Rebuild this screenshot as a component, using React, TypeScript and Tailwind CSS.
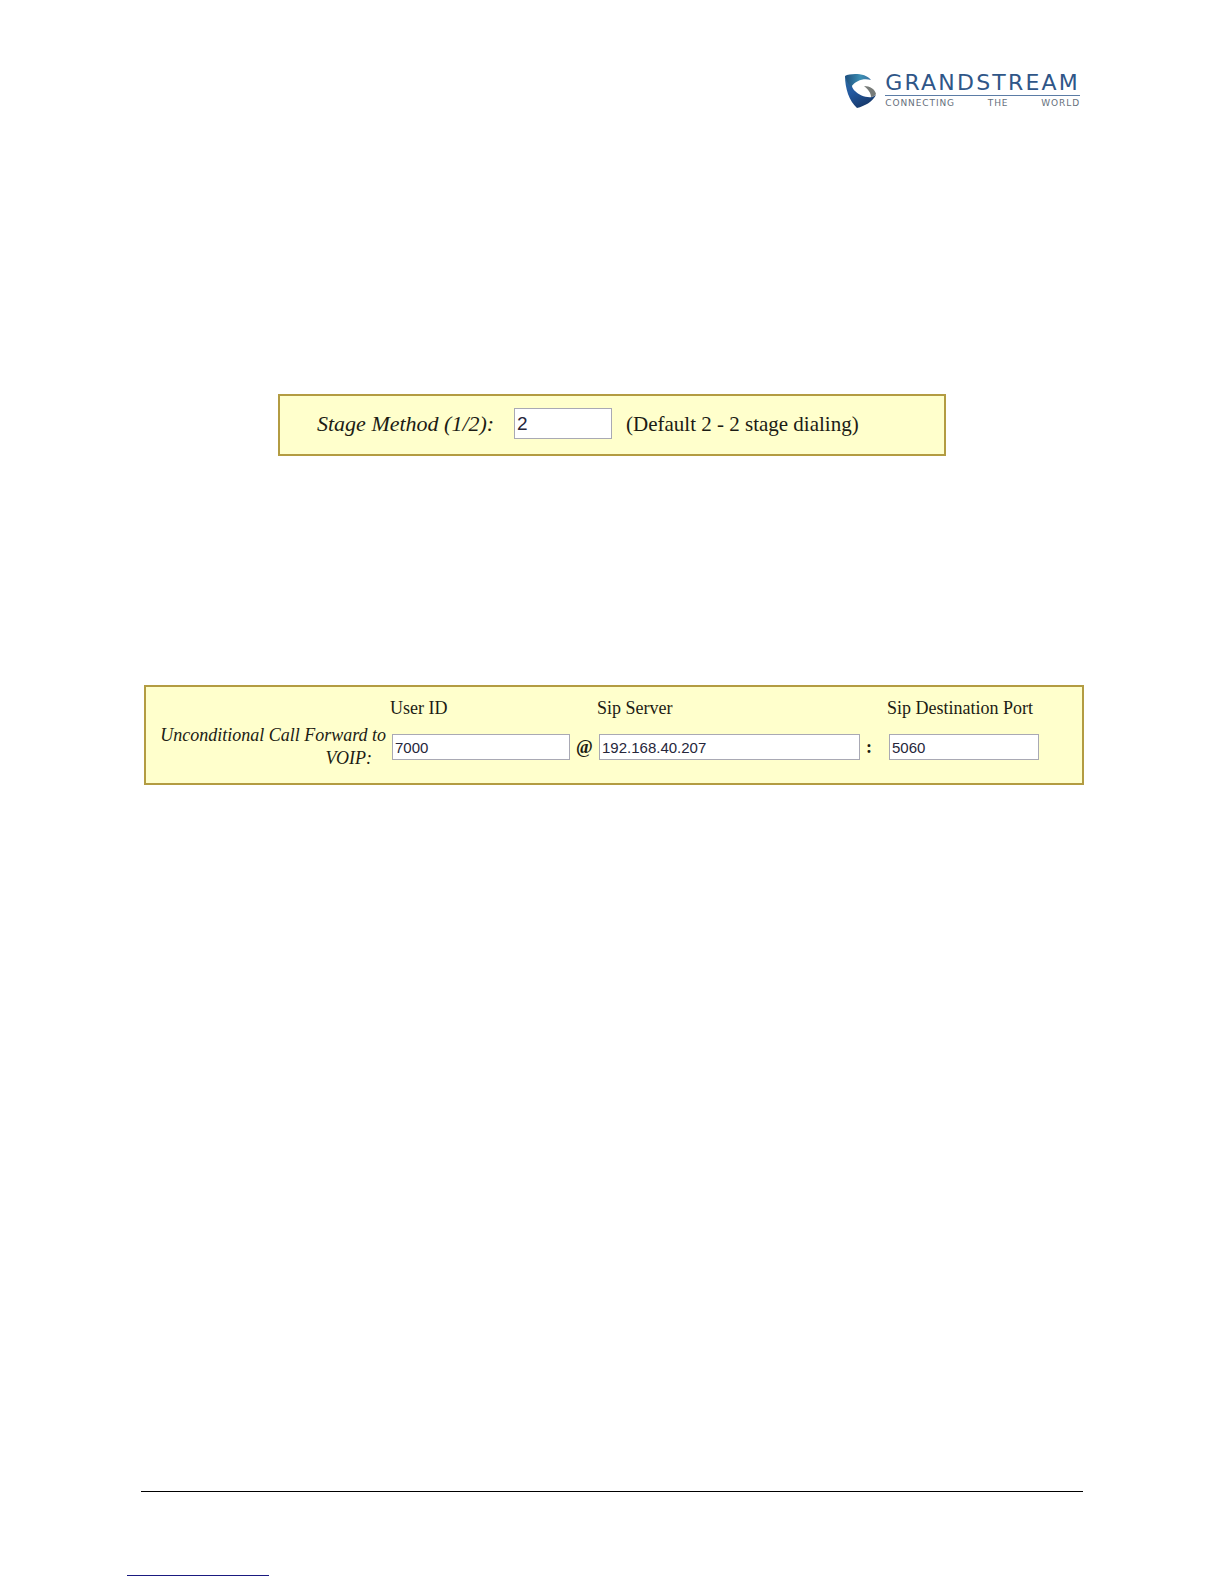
import React from 'react';

const inputClass = "block w-full border border-[#a9a9b4] bg-white text-[#26263a] font-['Liberation_Sans',sans-serif] outline-none";

const Logo = () => {
    return (
        <div className="flex items-start gap-2 text-[#2f5688] font-['DejaVu_Sans',sans-serif]">
            <svg className="mt-[2px] h-[36px] w-[33px] shrink-0" viewBox="0 0 33 36" aria-hidden="true">
                <defs>
                    <linearGradient id="top" x1="0" y1="0" x2="1" y2="0">
                        <stop offset="0" stopColor="#1d4d7c" />
                        <stop offset="0.6" stopColor="#3c8fb4" />
                        <stop offset="1" stopColor="#3a6f9f" />
                    </linearGradient>
                    <linearGradient id="side" x1="0" y1="0" x2="0.5" y2="1">
                        <stop offset="0" stopColor="#2b6a9c" />
                        <stop offset="0.5" stopColor="#2459a0" />
                        <stop offset="1" stopColor="#173a6c" />
                    </linearGradient>
                </defs>
                <path d="M1 3C1 15 5 28 13 35C21 33 28 29 32 22L28 24C22 25 15 22 11 18C8 15 7 12 9 9L4 4Z" fill="url(#side)" />
                <path d="M1 3C7 0 22 0 27 7C20 5 12 7 7 14C4 11 2 7 1 3Z" fill="url(#top)" />
                <path d="M20 13C26 13 31 16 32 21C31 23 29 24 27 24C27 20 24 16 20 13Z" fill="#777b78" />
            </svg>
            <div>
                <div className="border-b border-[#5b7ca6] text-[22px] leading-[24px] tracking-widest">GRANDSTREAM</div>
                <div className="mt-[2px] flex justify-between text-[9px] leading-[10px] tracking-widest text-[#66707c]">
                    <span>CONNECTING</span> <span>THE</span> <span>WORLD</span>
                </div>
            </div>
        </div>
    );
};

const StageMethod = () => {
    return (
        <div className="mx-auto flex w-full max-w-[668px] items-start border-2 border-[#b39c42] bg-[#ffffcc] pt-3 pb-[14px] pl-[37px]">
            <label htmlFor="stage" className="w-[197px] shrink-0 text-[22px] leading-[32px] italic">Stage Method (1/2):</label>
            <div className="w-[98px] shrink-0">
                <input id="stage" type="text" defaultValue="2" className={`${inputClass} h-[31px] px-[2px] text-[19px]`} />
            </div>
            <span className="ml-[14px] text-[21px] leading-[32px]">(Default 2 - 2 stage dialing)</span>
        </div>
    );
};

const CallForward = () => {
    return (
        <fieldset className="grid w-full grid-cols-[244fr_180fr_27fr_263fr_27fr_152fr] items-center gap-y-1 border-2 border-[#b39c42] bg-[#ffffcc] pt-[10px] pr-[43px] pb-[13px] text-[18px] leading-[23px]">
            <span></span>
            <label htmlFor="user">User ID</label>
            <span></span>
            <label htmlFor="server">Sip Server</label>
            <span></span>
            <label htmlFor="port" className="whitespace-nowrap">Sip Destination Port</label>
            <div className="pr-1 text-right italic whitespace-nowrap">
                Unconditional Call Forward to
                <div className="pr-[14px]">VOIP:</div>
            </div>
            <div className="pl-[2px]">
                <input id="user" type="text" defaultValue="7000" className={`${inputClass} h-[26px] px-[2px] text-[15px]`} />
            </div>
            <span className="pl-[6px] font-bold">@</span>
            <div className="pl-[2px]">
                <input id="server" type="text" defaultValue="192.168.40.207" className={`${inputClass} h-[26px] px-[2px] text-[15px]`} />
            </div>
            <span className="pl-[6px] font-bold">:</span>
            <div className="pl-[2px]">
                <input id="port" type="text" defaultValue="5060" className={`${inputClass} h-[26px] px-[2px] text-[15px]`} />
            </div>
        </fieldset>
    );
};

export default function App() {
    return (
        <div className="flex min-h-screen flex-col bg-white text-[#1c1c14] font-['Liberation_Serif',serif]">
            <header className="flex justify-end pt-[71px] pr-[144px]">
                <Logo />
            </header>
            <main className="flex-1 px-[140px] pb-10">
                <div className="pt-[285px]">
                    <StageMethod />
                </div>
                <div className="pt-[229px] pl-1">
                    <CallForward />
                </div>
            </main>
            <footer>
                <hr className="mx-[141px] border-t border-black" />
                <div className="mt-[83px] mb-2 ml-[127px] w-[142px] border-t border-[#1a1a80]"></div>
            </footer>
        </div>
    );
}
